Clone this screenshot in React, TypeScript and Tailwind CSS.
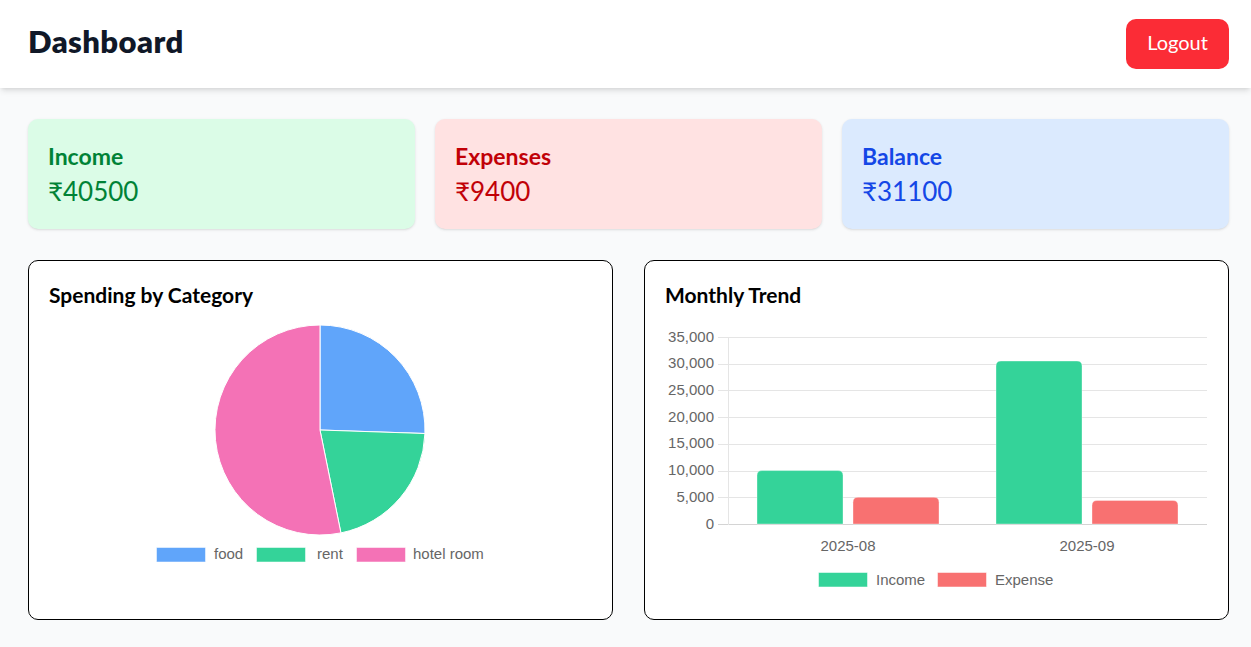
import React from "react";

const UI = { fontFamily: "Lato, 'Open Sans', sans-serif" };
const CH = "'Liberation Sans', Arial, sans-serif";

function arcPath(cx: number, cy: number, r: number, a0: number, a1: number) {
  const p = (a: number) => [cx + r * Math.sin(a), cy - r * Math.cos(a)];
  const [x0, y0] = p(a0);
  const [x1, y1] = p(a1);
  const large = a1 - a0 > Math.PI ? 1 : 0;
  return `M ${cx} ${cy} L ${x0} ${y0} A ${r} ${r} 0 ${large} 1 ${x1} ${y1} Z`;
}

function PieChart() {
  const data = [
    { label: "food", value: 2400, color: "#60a5fa", box: 107, text: 165 },
    { label: "rent", value: 2000, color: "#34d399", box: 207, text: 268 },
    { label: "hotel room", value: 5000, color: "#f472b6", box: 307, text: 364 },
  ];
  const total = data.reduce((s, d) => s + d.value, 0);
  let a = 0;
  const cx = 271;
  const cy = 121;
  const r = 105;
  return (
    <svg width={543} height={290} viewBox="0 0 543 290" className="block">
      {data.map((d) => {
        const a0 = a;
        const a1 = a + (d.value / total) * Math.PI * 2;
        a = a1;
        return (
          <path
            key={d.label}
            d={arcPath(cx, cy, r, a0, a1)}
            fill={d.color}
            stroke="#ffffff"
            strokeWidth={1}
            strokeLinejoin="round"
          />
        );
      })}
      {data.map((d) => (
        <g key={d.label + "l"}>
          <rect x={d.box + 0.5} y={238.5} width={49} height={14.5} fill={d.color} stroke="#ffffff" strokeOpacity={0.5} strokeWidth={1} />
          <text x={d.text} y={244.5} dominantBaseline="central" fontFamily={CH} fontSize={15} fill="#666666">
            {d.label}
          </text>
        </g>
      ))}
    </svg>
  );
}

function roundTopBar(x: number, y: number, w: number, h: number, r: number) {
  return `M ${x} ${y + h} L ${x} ${y + r} Q ${x} ${y} ${x + r} ${y} L ${x + w - r} ${y} Q ${x + w} ${y} ${x + w} ${y + r} L ${x + w} ${y + h} Z`;
}

function BarChart() {
  // svg origin at page (665, 309)
  const ox = 665;
  const oy = 309;
  const yOf = (v: number) => 524 - (v * 187) / 35000 - oy;
  const ticks = [0, 5000, 10000, 15000, 20000, 25000, 30000, 35000];
  const bars = [
    { x: 757, v: 10000, c: "#34d399" },
    { x: 853, v: 5000, c: "#f87171" },
    { x: 996, v: 30500, c: "#34d399" },
    { x: 1092, v: 4400, c: "#f87171" },
  ];
  return (
    <svg width={543} height={290} viewBox="0 0 543 290" className="block">
      {ticks.map((t) => (
        <g key={t}>
          <line
            x1={718 - ox}
            x2={1207 - ox}
            y1={Math.round(yOf(t)) + 0.5}
            y2={Math.round(yOf(t)) + 0.5}
            stroke={t === 0 ? "#d4d4d4" : "#e5e5e5"}
            strokeWidth={1}
          />
          <text
            x={715 - ox - 1}
            y={yOf(t) - 1}
            textAnchor="end"
            dominantBaseline="central"
            fontFamily={CH}
            fontSize={15}
            fill="#666666"
          >
            {t.toLocaleString("en-US")}
          </text>
        </g>
      ))}
      <line x1={728.5 - ox} x2={728.5 - ox} y1={yOf(35000)} y2={yOf(0) + 1} stroke="#e5e5e5" strokeWidth={1} />
      {bars.map((b, i) => (
        <path
          key={i}
          d={roundTopBar(b.x - ox, yOf(b.v), 86, yOf(0) - yOf(b.v), 5)}
          fill={b.c}
          stroke="#ffffff"
          strokeOpacity={0.35}
          strokeWidth={1}
        />
      ))}
      <text x={848 - ox} y={545.5 - oy} textAnchor="middle" dominantBaseline="central" fontFamily={CH} fontSize={15} fill="#666666">
        2025-08
      </text>
      <text x={1087 - ox} y={545.5 - oy} textAnchor="middle" dominantBaseline="central" fontFamily={CH} fontSize={15} fill="#666666">
        2025-09
      </text>
      <rect x={818.5 - ox} y={572.5 - oy} width={49} height={14.5} fill="#34d399" stroke="#ffffff" strokeOpacity={0.5} />
      <text x={876 - ox} y={579 - oy} dominantBaseline="central" fontFamily={CH} fontSize={15} fill="#666666">
        Income
      </text>
      <rect x={937.5 - ox} y={572.5 - oy} width={49} height={14.5} fill="#f87171" stroke="#ffffff" strokeOpacity={0.5} />
      <text x={995 - ox} y={579 - oy} dominantBaseline="central" fontFamily={CH} fontSize={15} fill="#666666">
        Expense
      </text>
    </svg>
  );
}

function StatCard({ title, value, bg, fg }: { title: string; value: string; bg: string; fg: string }) {
  return (
    <div className={`${bg} rounded-[10px] shadow-sm px-5 pt-5 pb-5`}>
      <div className={`${fg} text-[23px] leading-[34px] font-bold`}>{title}</div>
      <div className={`${fg} text-[26px] leading-[36px]`}>{value}</div>
    </div>
  );
}

export default function App() {
  return (
    <div className="min-h-screen bg-gray-50" style={UI}>
      <header className="h-[88px] bg-white shadow-md flex items-center justify-between pl-[28px] pr-[22px]">
        <h1 className="text-[31px] font-extrabold tracking-[0.4px] text-gray-900 mb-[5px]">Dashboard</h1>
        <button className="w-[103px] h-[50px] rounded-[10px] bg-red-500 text-white text-[20px] pb-[3px] mb-[1px]">Logout</button>
      </header>
      <main className="pl-[28px] pr-[22px] pt-[31px]">
        <div className="grid grid-cols-3 gap-5">
          <StatCard title="Income" value="₹40500" bg="bg-green-100" fg="text-green-700" />
          <StatCard title="Expenses" value="₹9400" bg="bg-red-100" fg="text-red-700" />
          <StatCard title="Balance" value="₹31100" bg="bg-blue-100" fg="text-blue-700" />
        </div>
        <div className="grid grid-cols-2 gap-[31px] mt-[31px]">
          <div className="bg-white border border-black rounded-[10px] p-5">
            <div className="text-[21px] leading-[28px] font-bold text-black">Spending by Category</div>
            <PieChart />
          </div>
          <div className="bg-white border border-black rounded-[10px] p-5">
            <div className="text-[21px] leading-[28px] font-bold text-black">Monthly Trend</div>
            <BarChart />
          </div>
        </div>
      </main>
    </div>
  );
}
